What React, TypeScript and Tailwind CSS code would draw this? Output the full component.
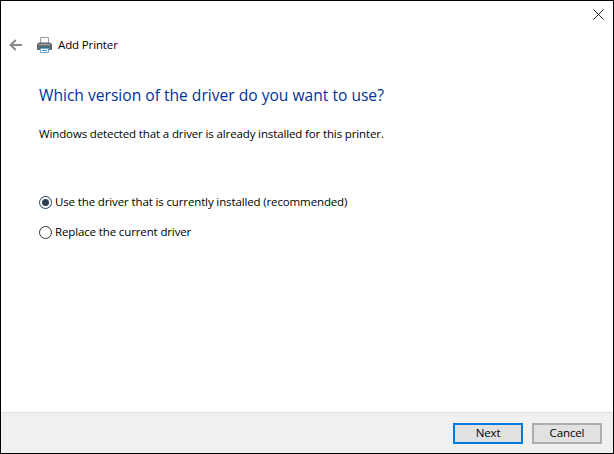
const uiFont = "font-['Open_Sans','Noto_Sans',sans-serif]"
const bodyText = 'text-[11.5px] tracking-[-0.13px] text-black'

function BackArrow() {
  return (
    <svg width="13" height="12" viewBox="0 0 13 12" className="block">
      <path d="M13 6H2M6.8 1L1.6 6l5.2 5" stroke="#8a8a8a" strokeWidth="2" fill="none" />
    </svg>
  )
}

function PrinterIcon() {
  return (
    <svg width="16" height="16" viewBox="0 0 16 16" className="block">
      <path d="M3.5 0.5h8v6h-8z" fill="#fbfbfb" stroke="#9a9a9a" />
      <path d="M0.5 8q0-2 2-2h10q2 0 2 2v4.5h-14z" fill="#6a6e72" stroke="#5a5d61" />
      <rect x="2" y="7" width="11" height="1" fill="#a4a7aa" />
      <rect x="3" y="10" width="9" height="1.5" fill="#1f6f8f" />
      <path d="M3.5 11.5h8v4h-8z" fill="#f7fbfe" stroke="#6fa9cf" />
      <rect x="5" y="13" width="5" height="1" fill="#4a9bd4" />
    </svg>
  )
}

function Radio({ checked, label }: { checked?: boolean; label: string }) {
  return (
    <div className="flex items-center h-[16px]">
      <span
        className={`flex items-center justify-center w-[13px] h-[13px] rounded-full border ${
          checked ? 'border-[#1d3f6e]' : 'border-[#333333]'
        }`}
      >
        {checked && <span className="w-[7px] h-[7px] rounded-full bg-[#2b3f57]" />}
      </span>
      <span className={`ml-[3px] ${bodyText}`}>{label}</span>
    </div>
  )
}

function Button({ label, focused }: { label: string; focused?: boolean }) {
  return (
    <div
      className={`w-[70px] h-[21px] flex items-center justify-center bg-[#e1e1e1] border-2 ${bodyText} ${
        focused ? 'border-[#0078d7]' : 'border-[#adadad]'
      }`}
    >
      {label}
    </div>
  )
}

export default function App() {
  return (
    <div className={`w-[614px] h-[454px] flex flex-col bg-white border border-black ${uiFont}`}>
      <div className="flex justify-end h-[27px] pt-[8px] pr-[9px]">
        <svg width="11" height="11" viewBox="0 0 11 11">
          <path d="M0.5 0.5l10 10M10.5 0.5l-10 10" stroke="#222222" fill="none" />
        </svg>
      </div>
      <div className="flex items-center h-[34px] pl-[8px]">
        <BackArrow />
        <span className="ml-[15px]">
          <PrinterIcon />
        </span>
        <span className={`ml-[5px] ${bodyText}`}>Add Printer</span>
      </div>
      <div className="flex-1 flex flex-col pl-[38px]">
        <div className="mt-[21px] text-[15.6px] leading-[24px] text-[#003399]">
          Which version of the driver do you want to use?
        </div>
        <div className="mt-[17px] leading-[16px]">
          <span className={bodyText}>Windows detected that a driver is already installed for this printer.</span>
        </div>
        <div className="mt-[52px] flex flex-col gap-[14px]">
          <Radio checked label="Use the driver that is currently installed (recommended)" />
          <Radio label="Replace the current driver" />
        </div>
      </div>
      <div className="flex justify-end items-center gap-[9px] h-[41px] pr-[11px] bg-[#f0f0f0] border-t border-[#dfdfdf]">
        <Button label="Next" focused />
        <Button label="Cancel" />
      </div>
    </div>
  )
}
